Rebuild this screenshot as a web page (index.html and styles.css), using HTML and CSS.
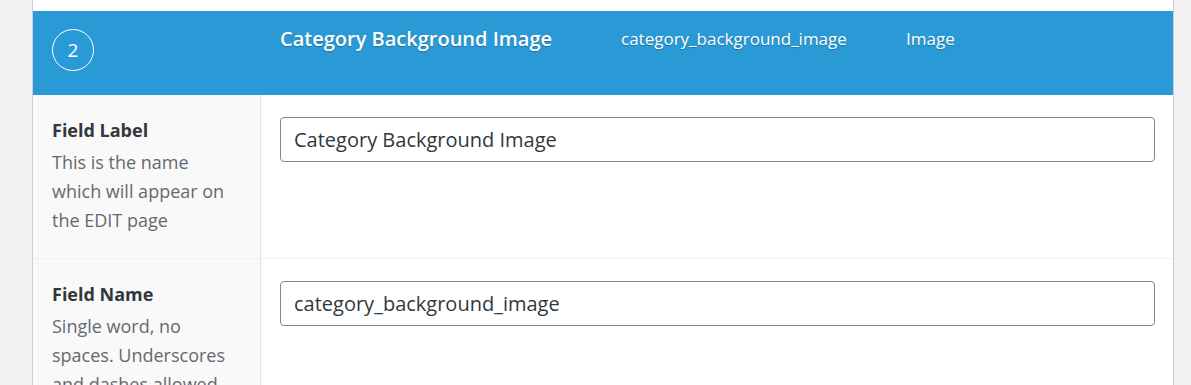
FILE: index.html
```html
<!DOCTYPE html>
<html lang="en">
<head>
    <meta charset="UTF-8">
    <meta name="viewport" content="width=device-width, initial-scale=1.0">
    <title>Field settings</title>
    <link rel="stylesheet" href="styles.css">
</head>
<body>
    <main class="wrap">
        <section class="field">
            <header class="field-head">
                <div class="field-order"><span class="order-badge">2</span></div>
                <div class="head-label">Category Background Image</div>
                <div class="head-name">category_background_image</div>
                <div class="head-type">Image</div>
            </header>

            <div class="field-row">
                <div class="row-label">
                    <strong>Field Label</strong>
                    <p>This is the name which will appear on the EDIT page</p>
                </div>
                <div class="row-input">
                    <input type="text" class="text-input" value="Category Background Image">
                </div>
            </div>

            <div class="field-row">
                <div class="row-label">
                    <strong>Field Name</strong>
                    <p>Single word, no spaces. Underscores and dashes allowed</p>
                </div>
                <div class="row-input">
                    <input type="text" class="text-input" value="category_background_image">
                </div>
            </div>
        </section>
    </main>
</body>
</html>
```

FILE: styles.css
```css
html{
    box-sizing: border-box;
    font-family: "Open Sans", "Noto Sans", sans-serif;
}

*,
*::after,
*::before{
    box-sizing: border-box;
}

body{
    margin: 0;
    background-color: #f1f1f1;
}

.wrap{
    margin-left: 32px;
    width: 1142px;
    height: 385px;
    overflow: hidden;
    background-color: #fff;
    border-left: 1px solid #ccd0d4;
    border-right: 1px solid #ccd0d4;
    padding-top: 11px;
}

.field-head{
    display: flex;
    height: 84px;
    margin-left: -1px;
    background-color: #2a9ad6;
    color: #fff;
}

.field-order{
    width: 229px;
    padding: 18px 0 0 20px;
}

.order-badge{
    display: flex;
    align-items: center;
    justify-content: center;
    width: 42px;
    height: 42px;
    border: 1px solid #fff;
    border-radius: 50%;
    font-size: 19px;
}

.head-label,
.head-name,
.head-type{
    padding-top: 14px;
    line-height: 28px;
    text-shadow: 0 1px 1px rgba(0,0,0,.25);
}

.head-label{
    width: 360px;
    padding-left: 19px;
    font-size: 20px;
    font-weight: 600;
}

.head-name{
    width: 285px;
    font-size: 17px;
}

.head-type{
    font-size: 17px;
}

.field-row{
    display: flex;
    border-bottom: 1px solid #f0f0f0;
}

.row-label{
    width: 228px;
    flex-shrink: 0;
    padding: 21px 28px 23px 19px;
    background-color: #f9f9f9;
    border-right: 1px solid #e1e1e1;
    color: #646970;
    font-size: 18px;
    line-height: 29px;
}

.row-label strong{
    display: block;
    color: #32373c;
}

.row-label p{
    margin: 3px 0 0;
}

.row-input{
    flex: 1;
    padding: 22px 18px 22px 19px;
}

.text-input{
    display: block;
    width: 875px;
    height: 45px;
    padding: 0 13px;
    border: 1px solid #7e8993;
    border-radius: 4px;
    color: #32373c;
    font-family: inherit;
    font-size: 20px;
}
```
